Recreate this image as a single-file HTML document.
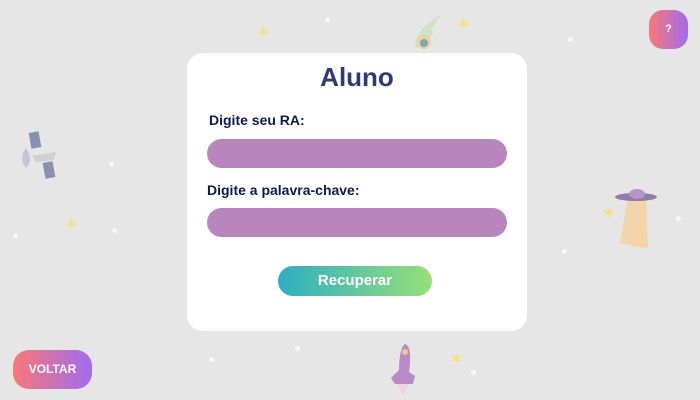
<!DOCTYPE html>
<html><head><meta charset="utf-8"><style>
*{margin:0;padding:0;box-sizing:border-box}
body{width:700px;height:400px;background:#e6e6e6;position:relative;overflow:hidden;font-family:"Liberation Sans",sans-serif}
.abs{position:absolute}
.card{left:187px;top:53px;width:340px;height:278px;background:#fff;border-radius:16px}
.t{left:187px;width:340px;top:62px;text-align:center;font-size:26px;font-weight:bold;color:#2e3a73}
.lbl{font-size:14px;font-weight:bold;color:#0d1a4d}
.inp{left:207px;width:300px;height:29px;background:#b886bd;border-radius:15px}
.btn{left:278px;top:266px;width:154px;height:30px;border-radius:15px;background:linear-gradient(90deg,#2eaec2,#96e078);color:#fff;font-weight:bold;font-size:15px;text-align:center;line-height:29px}
.pink{background:linear-gradient(90deg,#f87878,#a06cf0);color:#fff;font-weight:bold;text-align:center}
.dot{width:5px;height:5px;border-radius:50%;background:#f7f7f7}
.star{color:#f3e27a;font-size:18px;line-height:1}
</style></head><body>
<div class="abs card"></div>
<div class="abs t">Aluno</div>
<div class="abs lbl" style="left:209px;top:112px">Digite seu RA:</div>
<div class="abs inp" style="top:139px"></div>
<div class="abs lbl" style="left:207px;top:182px">Digite a palavra-chave:</div>
<div class="abs inp" style="top:208px"></div>
<div class="abs btn">Recuperar</div>
<div class="abs pink" style="left:13px;top:350px;width:79px;height:39px;border-radius:16px;line-height:39px;font-size:12px">VOLTAR</div>
<div class="abs pink" style="left:649px;top:10px;width:39px;height:39px;border-radius:14px;line-height:39px;font-size:11px">?</div>
<div class="abs dot" style="left:325px;top:17px"></div>
<div class="abs dot" style="left:568px;top:37px"></div>
<div class="abs dot" style="left:109px;top:162px"></div>
<div class="abs dot" style="left:13px;top:233px"></div>
<div class="abs dot" style="left:112px;top:228px"></div>
<div class="abs dot" style="left:562px;top:249px"></div>
<div class="abs dot" style="left:676px;top:216px"></div>
<div class="abs dot" style="left:209px;top:357px"></div>
<div class="abs dot" style="left:295px;top:346px"></div>
<div class="abs dot" style="left:471px;top:370px"></div>
<div class="abs star" style="left:256px;top:23px">✶</div>
<div class="abs star" style="left:456px;top:15px">✶</div>
<div class="abs star" style="left:64px;top:215px">✶</div>
<div class="abs star" style="left:601px;top:204px">✶</div>
<div class="abs star" style="left:449px;top:350px">✶</div>
<svg class="abs" style="left:410px;top:10px" width="45" height="45"><path d="M6 38 C2 28 14 14 32 4 C24 12 28 12 20 20 C26 18 22 26 16 34 Z" fill="#cfe3c3"/><ellipse cx="14" cy="32" rx="7" ry="7" fill="#f0cfa0"/><circle cx="14" cy="33" r="4" fill="#7aaab0"/></svg>
<svg class="abs" style="left:16px;top:130px" width="45" height="52"><rect x="14" y="2" width="10" height="16" fill="#8a90b0" transform="rotate(-10 19 10)"/><rect x="28" y="32" width="10" height="16" fill="#8a90b0" transform="rotate(-10 33 40)"/><path d="M10 18 Q2 28 10 38 Q18 30 10 18Z" fill="#c9c3d6"/><path d="M16 26 L40 22 L38 30 L20 32Z" fill="#d0d0d0"/></svg>
<svg class="abs" style="left:612px;top:188px" width="50" height="62"><path d="M16 10 L34 10 L36 60 L20 58 L8 55Z" fill="#f2d5a8"/><ellipse cx="24" cy="9" rx="21" ry="4" fill="#8e7ea8"/><ellipse cx="25" cy="6" rx="8" ry="5" fill="#b993c9"/></svg>
<svg class="abs" style="left:385px;top:344px" width="40" height="56"><path d="M20 0 C26 2 26 14 24 28 L30 32 L28 40 L10 40 L6 34 L14 26 C14 14 16 2 20 0Z" fill="#b88ac7"/><circle cx="20" cy="8" r="3" fill="#f0c890"/><path d="M12 40 L18 52 L24 40Z" fill="#f0d2e6"/></svg>
</body></html>
